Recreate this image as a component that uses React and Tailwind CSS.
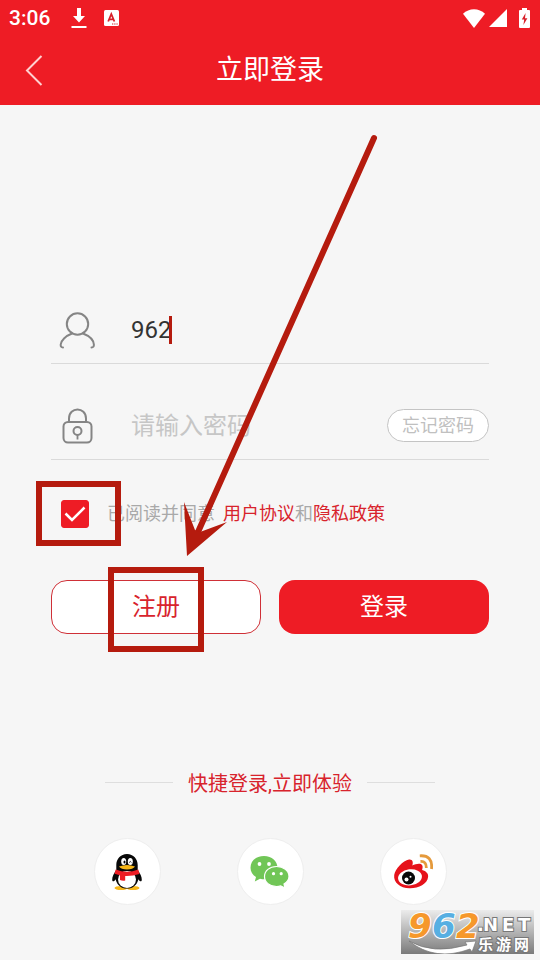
import { useState } from "react";

function StatusBar() {
  return (
    <div className="flex h-9 items-center justify-between pl-[9px] pr-[10px]">
      <div className="flex items-center">
        <span className="w-[42px] font-['Roboto',sans-serif] text-[21px] leading-9 font-medium">3:06</span>
        <svg className="ml-5 h-[22px] w-4" viewBox="0 0 16 22" fill="currentColor" aria-hidden="true">
          <path d="M6 1h4v8h4l-6 6.500-6-6.500h4zM0.500 19h15v2H0.500z" />
        </svg>
        <svg className="ml-[17px] h-4 w-[15px]" viewBox="0 0 15 16" aria-hidden="true">
          <rect width="15" height="16" rx="1.500" fill="#fff" />
          <path d="M4.200 11.500 7.300 4l3.100 7.500M5.300 9.300h4" fill="none" stroke="#d8202a" strokeWidth="1.800" />
          <path d="M8 13.500h1.300v1H8zM10.200 13.500h1.300v1h-1.300zM12.400 13.500h1.300v1h-1.300z" fill="#d8202a" />
        </svg>
      </div>
      <div className="flex items-center">
        <svg className="h-[19px] w-[22px]" viewBox="0 0 22 19" fill="currentColor" aria-hidden="true">
          <path d="M0 4.800C6-1.200 16-1.200 22 4.800L11 19z" />
        </svg>
        <svg className="ml-1 h-[18px] w-[18px]" viewBox="0 0 18 18" fill="currentColor" aria-hidden="true">
          <path d="M18 0v18H0z" />
        </svg>
        <svg className="ml-3 h-5 w-[11px]" viewBox="0 0 11 20" aria-hidden="true">
          <path d="M3 0h5v2h2q1 0 1 1v16q0 1-1 1H1q-1 0-1-1V3q0-1 1-1h2z" fill="#fff" />
          <path d="M6.600 5 2.800 11.500h2.400L4.400 17l4-6.800H6z" fill="#d8202a" />
        </svg>
      </div>
    </div>
  );
}

function UserIcon() {
  return (
    <svg className="h-[38px] w-9 shrink-0" viewBox="0 0 36 38" fill="none" stroke="#858585" strokeWidth="2" strokeLinecap="round" aria-hidden="true">
      <circle cx="18.500" cy="13" r="10.700" />
      <path d="M13 22.500C6.500 25 2 29.500 1.700 33.500Q1.500 36.500 4 36.500M24 22.500C30.500 25 34.500 29.500 34.900 33.500Q35 36.500 32.500 36.500" />
    </svg>
  );
}

function LockIcon() {
  return (
    <svg className="h-9 w-9 shrink-0" viewBox="0 0 36 36" fill="none" stroke="#858585" strokeWidth="2" aria-hidden="true">
      <rect x="4.500" y="14" width="28" height="20.500" rx="4.500" />
      <path d="M10 14V10.500C10-1.500 27-1.500 27 10.500V14" />
      <circle cx="18.500" cy="23" r="4" />
      <path d="M18.500 26.500v5" strokeWidth="1.800" />
    </svg>
  );
}

function QQIcon() {
  return (
    <svg className="h-9 w-[30px]" viewBox="0 0 30 36" aria-hidden="true">
      <ellipse cx="9" cy="34" rx="6.500" ry="2" fill="#f7b719" />
      <ellipse cx="21" cy="34" rx="6.500" ry="2" fill="#f7b719" />
      <path d="M15 0C8.500 0 4.300 5 4.300 11V16C2 19 0 23 .2 26c.2 2 2.200 1.500 3.400-.8C5 31 9 34.500 15 34.500S25 31 26.400 25.200c1.200 2.300 3.200 2.800 3.400.8.200-3-1.800-7-4.100-10V11C25.700 5 21.500 0 15 0z" fill="#080808" />
      <ellipse cx="15" cy="25.500" rx="9" ry="8.500" fill="#fff" />
      <ellipse cx="11.700" cy="7.500" rx="2.500" ry="3.500" fill="#fff" />
      <ellipse cx="18.300" cy="7.500" rx="2.500" ry="3.500" fill="#fff" />
      <ellipse cx="12.500" cy="8" rx="1" ry="1.600" />
      <path d="M17.200 8.500q1.100-2 2.200 0" fill="none" stroke="#000" strokeWidth=".9" />
      <path d="M7 12.500Q15 9.500 23 12.500 21 15.500 15 15.500T7 12.500z" fill="#f7b719" />
      <path d="M3.700 15.500Q15 20 26.300 15.500L27.500 20Q20 22.300 13.200 22V26.500Q10.500 27.200 8 26V21.200L2.500 19.700z" fill="#ed1c24" />
    </svg>
  );
}

function WeChatIcon() {
  return (
    <svg className="h-8 w-10" viewBox="0 0 40 32" aria-hidden="true">
      <path d="M14 0C6 0 .5 5.200.5 11.700c0 4 2 7 5.500 9.300L4.800 25.500 10 22.800c1.500.4 3 .5 4.500.5C21.700 23.300 27.500 18 27.500 11.700S22 0 14 0z" fill="#71c657" />
      <path d="M26.500 10.500c-7 0-12 4.400-12 10 0 5.700 5.200 10 12 10q2.300 0 4.200-.6L35 32l-1-4c3.100-2 5-4.500 5-7.500 0-5.600-5.500-10-12.500-10z" fill="#71c657" stroke="#fff" strokeWidth="1.200" />
      <g fill="#fff">
        <circle cx="9.500" cy="8" r="1.900" />
        <circle cx="19" cy="8" r="1.900" />
        <circle cx="23.500" cy="17.700" r="1.600" />
        <circle cx="31.200" cy="17.700" r="1.600" />
      </g>
    </svg>
  );
}

function WeiboIcon() {
  return (
    <svg className="h-[35px] w-10" viewBox="0 0 40 35" aria-hidden="true">
      <path d="M1.200 21C2 15 10 6.500 16 5.500c3.500-.5 4.500 2.500 3.300 6 4-2 9.500-2.800 10.200.5.400 1.500-.4 3.500-.4 4 4 1.200 6.500 3.500 6 7C34.300 30 25.500 34.500 16.500 34.300 7 34 .3 28.500 1.200 21z" fill="#e6121b" />
      <ellipse cx="17" cy="23.300" rx="12" ry="8" transform="rotate(-7 17 23.300)" fill="#fff" />
      <circle cx="15.500" cy="24" r="6.500" fill="#090909" />
      <circle cx="13.500" cy="25.500" r="2" fill="#fff" />
      <circle cx="17.500" cy="22.800" r="1" fill="#fff" />
      <path d="M27.500 7.500q6-.5 5.800 6.500M26.800 1.800Q40 1 38.500 15" fill="none" stroke="#e59a3c" strokeWidth="2.800" />
    </svg>
  );
}

function SocialButton({ label, children }) {
  return (
    <button type="button" aria-label={label} className="flex size-[67px] items-center justify-center rounded-full border border-[#eeeeee] bg-white">
      {children}
    </button>
  );
}

function Watermark() {
  return (
    <svg className="absolute right-[6px] bottom-[6px] h-[52px] w-[133px]" viewBox="0 -8 133 52" role="img" aria-label="962.NET 乐游网">
      <defs>
        <linearGradient id="plate" x1="0" y1="0" x2="0" y2="1">
          <stop offset="0" stopColor="#ececec" />
          <stop offset="1" stopColor="#7b7b7b" />
        </linearGradient>
      </defs>
      <rect width="133" height="44" fill="url(#plate)" />
      <path d="M8 31Q32 45 66 35L64 32 75 31 71 42 69 39Q34 52 8 31z" fill="#fff" stroke="#777" strokeWidth=".7" />
      <g fontFamily="DejaVu Sans, sans-serif" fontWeight="700" paintOrder="stroke">
        <g fontSize="34" fontStyle="italic" stroke="#fff" strokeWidth="2">
          <text x="7" y="28" fill="#f6982b">9</text>
          <text x="31" y="28" fill="#57afe2">6</text>
          <text x="55" y="28" fill="#f6982b">2</text>
        </g>
        <text x="76 82 101 117" y="21" fontSize="18" fill="#fff" stroke="#777" strokeWidth="2">.NET</text>
      </g>
      <text x="77 95 113" y="40" fontFamily="Noto Sans CJK SC, sans-serif" fontWeight="700" fontSize="15" fill="#fff" stroke="#777" strokeWidth="2" paintOrder="stroke">乐游网</text>
    </svg>
  );
}

export default function App() {
  const [account, setAccount] = useState("962");
  const [agreed, setAgreed] = useState(true);

  return (
    <div className="relative flex min-h-screen flex-col bg-[#f6f6f6] font-['Roboto','Noto_Sans_CJK_SC',sans-serif]">
      <header className="h-[105px] bg-[#ee1c25] text-white">
        <StatusBar />
        <div className="grid grid-cols-[1fr_auto_1fr] items-center">
          <button type="button" aria-label="返回" className="ml-6 flex h-[68px] w-12 items-center">
            <svg className="h-8 w-5" viewBox="0 0 20 32" fill="none" stroke="#ffd0d0" strokeWidth="2" aria-hidden="true">
              <path d="M17.500 2 3 16.500 17.500 31" />
            </svg>
          </button>
          <h1 className="text-[27px] leading-[68px]">立即登录</h1>
        </div>
      </header>

      <main className="flex flex-1 flex-col px-[51px] pt-[191px]">
        <form className="relative" onSubmit={(e) => e.preventDefault()}>
          <div className="flex h-[68px] items-center border-b border-[#dadada] pl-2">
            <label htmlFor="account" aria-label="账号"><UserIcon /></label>
            <div className="relative ml-9 flex-1">
              <input id="account" value={account} onChange={(e) => setAccount(e.target.value)} className="w-full bg-transparent text-2xl text-[#333333] caret-[#b51b0e] outline-none" />
              <span className="absolute top-0.5 left-[38px] h-7 w-[3px] bg-[#b51b0e]" />
            </div>
          </div>
          <div className="mt-7 flex h-[68px] items-center border-b border-[#dadada] pl-2">
            <label htmlFor="password" aria-label="密码"><LockIcon /></label>
            <input id="password" type="password" placeholder="请输入密码" className="ml-9 min-w-0 flex-1 bg-transparent text-2xl outline-none placeholder:text-[#c6c6c6]" />
            <button type="button" className="h-[33px] w-[102px] rounded-full border border-[#c4c4c4] bg-white text-lg leading-[31px] text-[#c0c0c0]">忘记密码</button>
          </div>

          <div className="relative mt-9 flex h-9 items-center pl-[10px] text-lg text-[#a9a9a9]">
            <span className="relative flex size-7">
              <input id="agree" type="checkbox" checked={agreed} onChange={(e) => setAgreed(e.target.checked)} className="peer size-7 appearance-none rounded-[3px] border border-[#ee1c25] checked:bg-[#ee1c25]" />
              <svg className="pointer-events-none absolute inset-0 hidden size-7 peer-checked:block" viewBox="0 0 28 28" fill="none" stroke="#fff" strokeWidth="2.500" aria-hidden="true">
                <path d="M4.500 13.500 11 20 23.500 7.500" />
              </svg>
            </span>
            <label htmlFor="agree" className="ml-[18px]">已阅读并同意</label>
            <a href="#terms" className="ml-2 text-[#d8232c]">用户协议</a>
            <span>和</span>
            <a href="#privacy" className="text-[#d8232c]">隐私政策</a>
            <span className="pointer-events-none absolute -top-[15px] -left-[15px] h-[65px] w-[85px] border-6 border-[#b51b0e]" />
          </div>

          <div className="mt-12 flex gap-[18px] text-2xl">
            <div className="relative flex flex-1">
              <button type="button" className="h-[54px] flex-1 rounded-2xl border border-[#cf3037] bg-white text-[#d8232c]">注册</button>
              <span className="pointer-events-none absolute -top-[13px] left-1/2 h-[85px] w-24 -translate-x-1/2 border-6 border-[#b51b0e]" />
            </div>
            <button type="submit" className="h-[54px] flex-1 rounded-2xl bg-[#ee1c25] text-white">登录</button>
          </div>

          <svg className="pointer-events-none absolute -top-[166px] left-[129px] h-[430px] w-[204px]" viewBox="180 130 204 430" aria-hidden="true">
            <path d="M374 138 198 532" stroke="#b51b0e" strokeWidth="6" strokeLinecap="round" />
            <path d="M184 502 195 530 200 532 227 522 187 556z" fill="#b51b0e" />
          </svg>
        </form>

        <section className="mt-[130px]">
          <div className="flex items-center justify-center gap-[15px]">
            <span className="h-px w-[68px] bg-[#dedede]" />
            <h2 className="pt-1 text-xl leading-8 text-[#d8232c]">快捷登录,立即体验</h2>
            <span className="h-px w-[68px] bg-[#dedede]" />
          </div>
          <div className="mt-[38px] flex justify-center gap-[76px]">
            <SocialButton label="QQ"><QQIcon /></SocialButton>
            <SocialButton label="微信"><WeChatIcon /></SocialButton>
            <SocialButton label="微博"><WeiboIcon /></SocialButton>
          </div>
        </section>
      </main>
      <Watermark />
    </div>
  );
}
